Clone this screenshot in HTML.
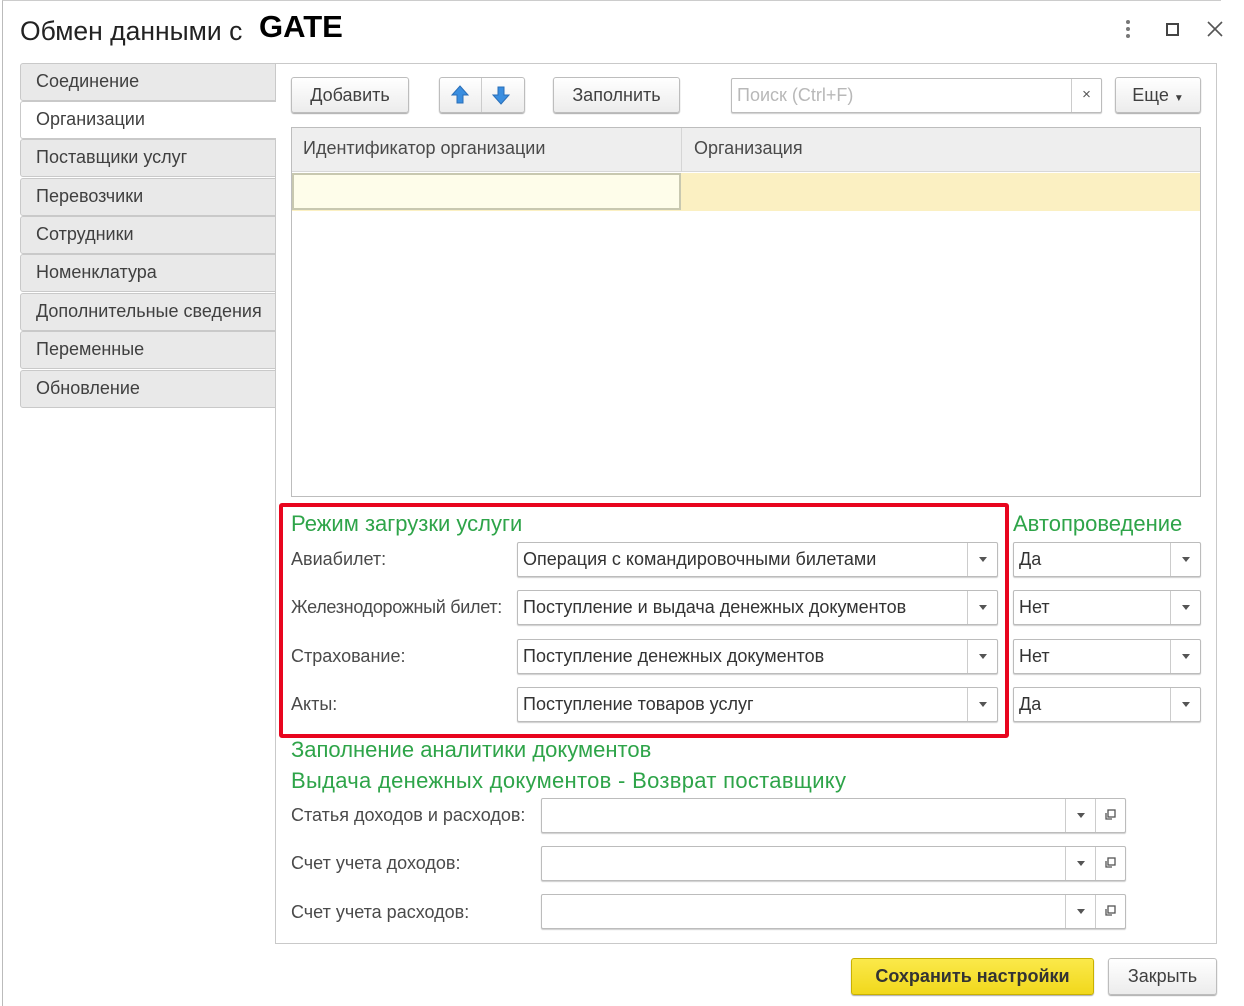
<!DOCTYPE html>
<html><head><meta charset="utf-8"><style>
*{box-sizing:border-box;margin:0;padding:0}
body{width:1244px;height:1006px;background:#fff;position:relative;overflow:hidden;font-family:"Liberation Sans","Noto Sans CJK SC",sans-serif;color:#333;font-size:17px}
.a{position:absolute}
.win{left:2px;top:0;width:1219px;height:1006px;border-left:1px solid #bbb;border-top:1px solid #ccc}
.tab{left:20px;width:256px;height:38px;background:#e9e9e9;border:1px solid #c9c9c9;border-radius:3px 0 0 3px;padding:7px 0 0 15px;font-size:18px;color:#404040}
.tab.on{background:#fff;border-right:none}
.btn{height:36px;border:1px solid #bdbdbd;border-radius:3px;background:linear-gradient(#fff,#ececec);box-shadow:0 1px 1px #aaa;text-align:center;line-height:34px;font-size:18px;color:#404040}
.g{color:#2ea449;font-size:22px}
.lbl{font-size:18px;color:#4a4a4a}
.fld{height:35px;border:1px solid #bcbcbc;border-radius:2px;background:#fff;box-shadow:0 1px 1px #ccc;font-size:18px;line-height:33px;padding-left:5px;color:#333}
.dd{position:absolute;right:0;top:0;width:30px;height:33px;border-left:1px solid #ccc}
.dd:after{content:"";position:absolute;left:11px;top:14px;border:4px solid transparent;border-top:5px solid #555;border-bottom:0}
.op{position:absolute;right:0;top:0;width:30px;height:33px;border-left:1px solid #ccc}
</style></head><body>
<div class="a win"></div>
<div class="a" style="left:20px;top:16px;font-size:26.5px;color:#222">Обмен данными с</div>
<div class="a" style="left:259px;top:9px;font-size:31px;font-weight:bold;color:#000">GATE</div>
<div class="a" style="left:1126px;top:20px;width:4px;height:18px"><div style="width:4px;height:4px;border-radius:2px;background:#777;margin-bottom:3px"></div><div style="width:4px;height:4px;border-radius:2px;background:#777;margin-bottom:3px"></div><div style="width:4px;height:4px;border-radius:2px;background:#777"></div></div>
<div class="a" style="left:1166px;top:23px;width:13px;height:13px;border:2px solid #444"></div>
<svg class="a" style="left:1207px;top:21px" width="16" height="16"><path d="M1 1L15 15M15 1L1 15" stroke="#555" stroke-width="1.6"/></svg>

<div class="a tab" style="top:63px">Соединение</div>
<div class="a tab on" style="top:101px">Организации</div>
<div class="a tab" style="top:139px">Поставщики услуг</div>
<div class="a tab" style="top:178px">Перевозчики</div>
<div class="a tab" style="top:216px">Сотрудники</div>
<div class="a tab" style="top:254px">Номенклатура</div>
<div class="a tab" style="top:293px">Дополнительные сведения</div>
<div class="a tab" style="top:331px">Переменные</div>
<div class="a tab" style="top:370px">Обновление</div>

<div class="a" style="left:275px;top:63px;width:942px;height:881px;border:1px solid #c9c9c9;border-left:1px solid #c9c9c9"></div>
<div class="a" style="left:275px;top:102px;width:2px;height:36px;background:#fff"></div>

<div class="a btn" style="left:291px;top:77px;width:118px">Добавить</div>
<div class="a btn" style="left:439px;top:77px;width:86px"></div>
<div class="a" style="left:481px;top:78px;width:1px;height:34px;background:#ccc"></div>
<svg class="a" style="left:450px;top:85px" width="20" height="20"><path d="M10 1L18 10H13V18H7V10H2Z" fill="#3a8ee0" stroke="#2a6fb8"/></svg>
<svg class="a" style="left:491px;top:85px" width="20" height="20"><path d="M10 19L18 10H13V2H7V10H2Z" fill="#3a8ee0" stroke="#2a6fb8"/></svg>
<div class="a btn" style="left:553px;top:77px;width:127px">Заполнить</div>
<div class="a fld" style="left:731px;top:78px;width:371px;height:35px;color:#b8b8b8">Поиск (Ctrl+F)<div class="op" style="text-align:center;color:#555;font-size:15px;line-height:31px">×</div></div>
<div class="a btn" style="left:1115px;top:77px;width:86px">Еще <span style="font-size:10px">▼</span></div>

<div class="a" style="left:291px;top:127px;width:910px;height:370px;border:1px solid #bdbdbd"></div>
<div class="a" style="left:292px;top:128px;width:908px;height:44px;background:#eeeeee;border-bottom:1px solid #d8d8d8"></div>
<div class="a" style="left:681px;top:128px;width:1px;height:44px;background:#d5d5d5"></div>
<div class="a lbl" style="left:303px;top:138px">Идентификатор организации</div>
<div class="a lbl" style="left:694px;top:138px">Организация</div>
<div class="a" style="left:292px;top:173px;width:908px;height:38px;background:#fbf0c2"></div>
<div class="a" style="left:292px;top:173px;width:389px;height:37px;background:#fefdea;border:2px solid #c8c8b0"></div>

<div class="a" style="left:279px;top:503px;width:730px;height:235px;border:4px solid #e8051e;border-radius:3px"></div>
<div class="a g" style="left:291px;top:511px">Режим загрузки услуги</div>
<div class="a g" style="left:1013px;top:511px">Автопроведение</div>

<div class="a lbl" style="left:291px;top:549px">Авиабилет:</div>
<div class="a fld" style="left:517px;top:542px;width:481px">Операция с командировочными билетами<div class="dd"></div></div>
<div class="a fld" style="left:1013px;top:542px;width:188px">Да<div class="dd"></div></div>
<div class="a lbl" style="left:291px;top:597px;letter-spacing:-0.3px">Железнодорожный билет:</div>
<div class="a fld" style="left:517px;top:590px;width:481px">Поступление и выдача денежных документов<div class="dd"></div></div>
<div class="a fld" style="left:1013px;top:590px;width:188px">Нет<div class="dd"></div></div>
<div class="a lbl" style="left:291px;top:646px">Страхование:</div>
<div class="a fld" style="left:517px;top:639px;width:481px">Поступление денежных документов<div class="dd"></div></div>
<div class="a fld" style="left:1013px;top:639px;width:188px">Нет<div class="dd"></div></div>
<div class="a lbl" style="left:291px;top:694px">Акты:</div>
<div class="a fld" style="left:517px;top:687px;width:481px">Поступление товаров услуг<div class="dd"></div></div>
<div class="a fld" style="left:1013px;top:687px;width:188px">Да<div class="dd"></div></div>

<div class="a g" style="left:291px;top:737px">Заполнение аналитики документов</div>
<div class="a g" style="left:291px;top:768px;letter-spacing:0.3px">Выдача денежных документов - Возврат поставщику</div>

<div class="a lbl" style="left:291px;top:805px">Статья доходов и расходов:</div>
<div class="a lbl" style="left:291px;top:853px">Счет учета доходов:</div>
<div class="a lbl" style="left:291px;top:902px">Счет учета расходов:</div>
<div class="a fld" style="left:541px;top:798px;width:585px"><div class="dd" style="right:30px"></div><div class="op"><svg width="30" height="33"><rect x="12" y="11" width="7" height="7" fill="none" stroke="#555" stroke-width="1.3"/><path d="M10 14v6h6" fill="none" stroke="#555" stroke-width="1.3"/></svg></div></div>
<div class="a fld" style="left:541px;top:846px;width:585px"><div class="dd" style="right:30px"></div><div class="op"><svg width="30" height="33"><rect x="12" y="11" width="7" height="7" fill="none" stroke="#555" stroke-width="1.3"/><path d="M10 14v6h6" fill="none" stroke="#555" stroke-width="1.3"/></svg></div></div>
<div class="a fld" style="left:541px;top:894px;width:585px"><div class="dd" style="right:30px"></div><div class="op"><svg width="30" height="33"><rect x="12" y="11" width="7" height="7" fill="none" stroke="#555" stroke-width="1.3"/><path d="M10 14v6h6" fill="none" stroke="#555" stroke-width="1.3"/></svg></div></div>

<div class="a btn" style="left:851px;top:958px;width:243px;height:37px;background:linear-gradient(#fbe94a,#f1d81c);border-color:#c9b100;font-weight:bold;color:#333">Сохранить настройки</div>
<div class="a btn" style="left:1108px;top:958px;width:109px;height:37px">Закрыть</div>
</body></html>
